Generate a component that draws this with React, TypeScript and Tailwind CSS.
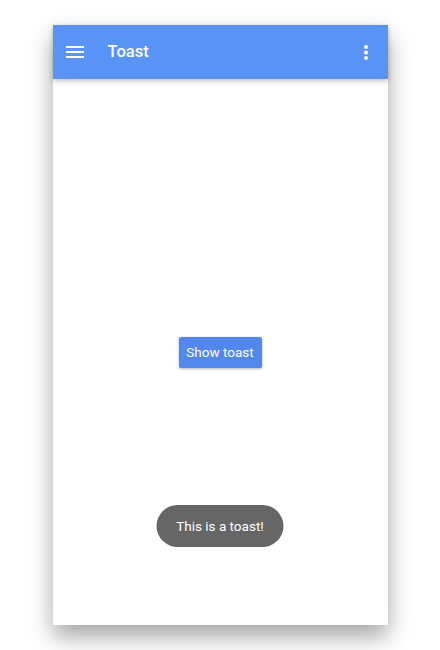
import { useState } from "react";

// Phone frame with an app bar, a centered button and a toast pill
export default function App() {
  const [visible, setVisible] = useState(true);

  return (
    <div className="min-h-[650px] bg-white flex justify-center pt-[25px]" style={{ fontFamily: "Roboto, 'Noto Sans', sans-serif" }}>
      <div className="relative w-[335px] h-[600px] bg-white flex flex-col shadow-[0_12px_22px_rgba(0,0,0,0.35)]">
        <header className="h-[54px] bg-[#5a93f6] flex items-center px-[13px] shadow-[0_2px_5px_rgba(0,0,0,0.25)] z-10">
          <svg width="18" height="12" viewBox="0 0 18 12" className="shrink-0">
            <rect x="0" y="0" width="18" height="2" fill="white" />
            <rect x="0" y="5" width="18" height="2" fill="white" />
            <rect x="0" y="10" width="18" height="2" fill="white" />
          </svg>
          <h1 className="ml-[24px] text-[16.5px] font-medium text-white flex-1">Toast</h1>
          <svg width="4" height="15" viewBox="0 0 4 15" className="mr-[7px]">
            <circle cx="2" cy="2" r="2" fill="white" />
            <circle cx="2" cy="7.5" r="2" fill="white" />
            <circle cx="2" cy="13" r="2" fill="white" />
          </svg>
        </header>

        <main className="flex-1 flex items-center justify-center">
          <button
            type="button"
            onClick={() => setVisible(true)}
            className="h-[31px] w-[83px] bg-[#5288ed] text-white text-[13.5px] rounded-[2px] shadow-[0_1px_3px_rgba(0,0,0,0.3)]"
          >
            Show toast
          </button>
        </main>

        {visible && (
          <div className="absolute left-1/2 -translate-x-1/2 bottom-[78px] h-[42px] w-[127px] rounded-full bg-[#666666] text-white text-[13.5px] flex items-center justify-center">
            This is a toast!
          </div>
        )}
      </div>
    </div>
  );
}
